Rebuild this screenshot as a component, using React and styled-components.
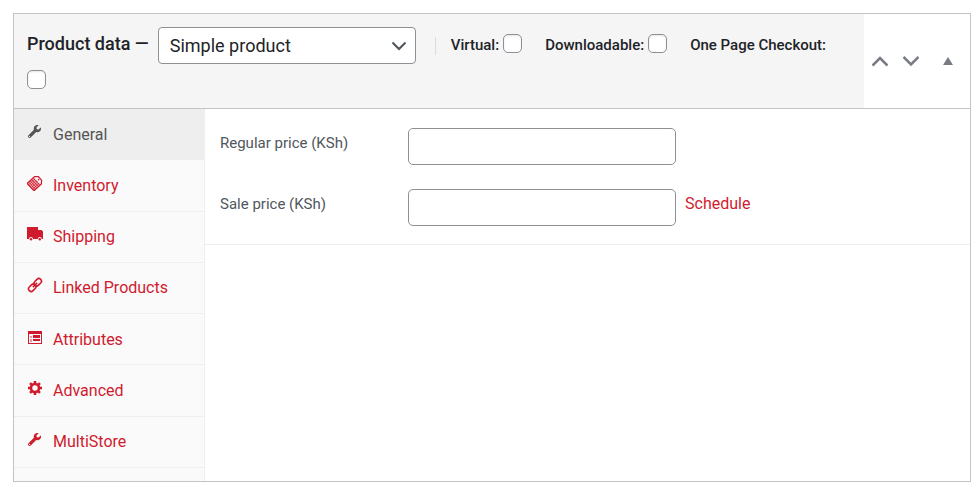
import React from "react";
import styled, { createGlobalStyle } from "styled-components";
import { FaWrench } from "react-icons/fa";

const GlobalStyle = createGlobalStyle`
  *, *::before, *::after { box-sizing: border-box; }
  body {
    margin: 0;
    background: #fff;
    font-family: Roboto, "Open Sans", sans-serif;
    color: #1d2327;
  }
`;

const Panel = styled.section`
  margin: 13px 8px 7px 13px;
  border: 1px solid #c3c4c7;
  background: #fff;
`;

const Header = styled.header`
  display: flex;
  border-bottom: 1px solid #c3c4c7;
`;

const HeaderMain = styled.div`
  flex: 1;
  display: flex;
  flex-wrap: wrap;
  align-items: center;
  row-gap: 6px;
  padding: 13px 13px 15px;
  background: #f5f5f5;
`;

const Title = styled.h2`
  margin: 0 9px 0 0;
  font-size: 18px;
  line-height: 24px;
  font-weight: 500;
  padding-bottom: 4px;
`;

const SelectWrap = styled.div`
  position: relative;
  width: 258px;
  height: 37px;

  svg {
    position: absolute;
    right: 10px;
    top: 12px;
    color: #50575e;
    pointer-events: none;
  }
`;

const TypeSelect = styled.select`
  appearance: none;
  width: 100%;
  height: 100%;
  padding: 0 32px 0 11px;
  border: 1px solid #8c8f94;
  border-radius: 4px;
  background: #fff;
  color: #1d2327;
  font: 400 18px Roboto, sans-serif;
`;

const Divider = styled.span`
  width: 1px;
  height: 18px;
  margin: 0 15px 0 19px;
  background: #dcdcde;
`;

const OptionLabel = styled.label`
  padding-bottom: 2px;
  font-size: 15px;
  line-height: 20px;
  font-weight: 500;
  margin-right: 4px;
`;

const CheckBox = styled.input`
  appearance: none;
  width: 19px;
  height: 19px;
  margin: 0 23px 4px 0;
  border: 1px solid #8c8f94;
  border-radius: 5px;
  background: #fff;
  box-shadow: inset 0 1px 2px rgba(0, 0, 0, 0.1);
`;

const Handles = styled.div`
  display: flex;
  align-items: center;
  padding-right: 12px;
`;

const HandleButton = styled.button`
  display: grid;
  place-items: center;
  width: ${(p) => (p.$wide ? "20px" : "31px")};
  height: 36px;
  margin-left: ${(p) => (p.$wide ? "12px" : "0")};
  padding: 0;
  border: 0;
  background: none;
  color: #787c82;
`;

const Body = styled.div`
  display: flex;
`;

const Sidebar = styled.nav`
  width: 191px;
  padding-bottom: 13px;
  border-right: 1px solid #eee;
  background: #fafafa;
`;

const TabList = styled.ul`
  display: grid;
  grid-auto-rows: 1fr;
  height: 359px;
  margin: 0;
  padding: 0;
  list-style: none;
`;

const Tab = styled.li`
  display: flex;
  border-bottom: 1px solid #eee;
  background: ${(p) => (p.$active ? "#eee" : "transparent")};
`;

const TabLink = styled.a`
  flex: 1;
  display: flex;
  align-items: center;
  gap: 10px;
  padding: 1px 0 0 12px;
  font-size: 16px;
  line-height: 20px;
  text-decoration: none;
  color: ${(p) => (p.$active ? "#555" : "#d01b2e")};
`;

const TabIcon = styled.span`
  display: grid;
  place-items: center;
  width: 17px;
  height: 16px;
  margin-bottom: 6px;
`;

const Content = styled.main`
  flex: 1;
`;

const PriceFields = styled.div`
  display: grid;
  grid-template-columns: 179px 268px 1fr;
  column-gap: 9px;
  row-gap: 24px;
  align-items: center;
  padding: 19px 15px 18px;
  border-bottom: 1px solid #eee;
`;

const FieldLabel = styled.label`
  padding-bottom: 8px;
  font-size: 15px;
  line-height: 20px;
  color: #50575e;
`;

const PriceInput = styled.input`
  grid-column: 2;
  width: 100%;
  height: 37px;
  padding: 0 8px;
  border: 1px solid #8c8f94;
  border-radius: 5px;
  background: #fff;
  font: 16px Roboto, sans-serif;
`;

const ScheduleLink = styled.a`
  padding-bottom: 8px;
  font-size: 16px;
  line-height: 20px;
  text-decoration: none;
  color: #d01b2e;
`;

const Chevron = ({ up, size = 16, width = 2.6 }) => (
  <svg width={size} height={size} viewBox="0 0 16 16" fill="none" stroke="currentColor" strokeWidth={width}>
    <path d={up ? "M0.5 12.5 8 5l7.5 7.5" : "M0.5 4 8 11.5 15.5 4"} />
  </svg>
);

const TicketIcon = () => (
  <svg width="16" height="16" viewBox="0 0 16 16">
    <g transform="rotate(-43 8 8)">
      <path d="M2 3h10l2.8 2.6v4.8L12 13H2z" fill="#fff" stroke="currentColor" strokeWidth="1.3" />
      <path d="M2 3h9v10H2z" fill="currentColor" opacity=".35" />
      <path d="M3 5h8M3 7h8M3 9h8M3 11h8M4 3.5v9M6 3.5v9M8 3.5v9M10 3.5v9" stroke="currentColor" strokeWidth=".7" fill="none" />
      <circle cx="13" cy="8" r=".8" fill="currentColor" />
    </g>
  </svg>
);

const TruckIcon = () => (
  <svg width="17" height="16" viewBox="0 0 17 16" fill="currentColor">
    <path d="M1 1h11v3h3.5L17 5.5V13h-1.200a2 2 0 0 0-4 0H7a2 2 0 0 0-4 0H1z" />
    <circle cx="5" cy="13.200" r="1.200" />
    <circle cx="13.800" cy="13.200" r="1.200" />
  </svg>
);

const ChainIcon = () => (
  <svg width="16" height="16" viewBox="0 0 16 16" fill="none" stroke="currentColor" strokeWidth="1.6">
    <g transform="rotate(-45 8 8)">
      <rect x="0" y="5.400" width="8.200" height="5.200" rx="2.600" />
      <rect x="7.800" y="5.400" width="8.200" height="5.200" rx="2.600" />
      <path d="M5 8h6" />
    </g>
  </svg>
);

const AttributesIcon = () => (
  <svg width="16" height="16" viewBox="0 0 16 16">
    <path d="M1 2h14v13H1z" fill="currentColor" />
    <path d="M2 5h12v9H2z" fill="#fafafa" />
    <path d="M3 7h2v2H3zM3 10h2v3H3z" fill="currentColor" opacity=".45" />
    <path d="M6 6h7v3H6zM6 10h7v2H6z" fill="currentColor" />
  </svg>
);

const GearIcon = () => (
  <svg width="16" height="16" viewBox="0 0 16 16">
    <circle cx="8" cy="8" r="4" fill="none" stroke="currentColor" strokeWidth="2.600" />
    {[0, 45, 90, 135, 180, 225, 270, 315].map((angle) => (
      <path key={angle} d="M6.700 1h2.600v3H6.700z" fill="currentColor" transform={`rotate(${angle} 8 8)`} />
    ))}
  </svg>
);

const tabs = [
  { label: "General", icon: <FaWrench size={13} />, active: true },
  { label: "Inventory", icon: <TicketIcon /> },
  { label: "Shipping", icon: <TruckIcon /> },
  { label: "Linked Products", icon: <ChainIcon /> },
  { label: "Attributes", icon: <AttributesIcon /> },
  { label: "Advanced", icon: <GearIcon /> },
  { label: "MultiStore", icon: <FaWrench size={13} /> },
];

const options = [
  { id: "virtual", label: "Virtual:" },
  { id: "downloadable", label: "Downloadable:" },
  { id: "one-page-checkout", label: "One Page Checkout:" },
];

export default function App() {
  return (
    <>
      <GlobalStyle />
      <Panel>
        <Header>
          <HeaderMain>
            <Title>Product data —</Title>
            <SelectWrap>
              <TypeSelect aria-label="Product type" defaultValue="simple">
                <option value="simple">Simple product</option>
              </TypeSelect>
              <Chevron size={14} width={2.4} />
            </SelectWrap>
            <Divider />
            {options.map(({ id, label }) => (
              <React.Fragment key={id}>
                <OptionLabel htmlFor={id}>{label}</OptionLabel>
                <CheckBox type="checkbox" id={id} />
              </React.Fragment>
            ))}
          </HeaderMain>
          <Handles>
            <HandleButton type="button" aria-label="Move up"><Chevron up /></HandleButton>
            <HandleButton type="button" aria-label="Move down"><Chevron /></HandleButton>
            <HandleButton type="button" aria-label="Toggle panel" $wide>
              <svg width="10" height="8" viewBox="0 0 10 8" fill="currentColor"><path d="M5 0l5 8H0z" /></svg>
            </HandleButton>
          </Handles>
        </Header>
        <Body>
          <Sidebar aria-label="Product data sections">
            <TabList>
              {tabs.map(({ label, icon, active }) => (
                <Tab key={label} $active={active}>
                  <TabLink href="#" $active={active}>
                    <TabIcon>{icon}</TabIcon>
                    {label}
                  </TabLink>
                </Tab>
              ))}
            </TabList>
          </Sidebar>
          <Content>
            <PriceFields>
              <FieldLabel htmlFor="regular-price">Regular price (KSh)</FieldLabel>
              <PriceInput id="regular-price" type="text" />
              <span />
              <FieldLabel htmlFor="sale-price">Sale price (KSh)</FieldLabel>
              <PriceInput id="sale-price" type="text" />
              <ScheduleLink href="#">Schedule</ScheduleLink>
            </PriceFields>
          </Content>
        </Body>
      </Panel>
    </>
  );
}
